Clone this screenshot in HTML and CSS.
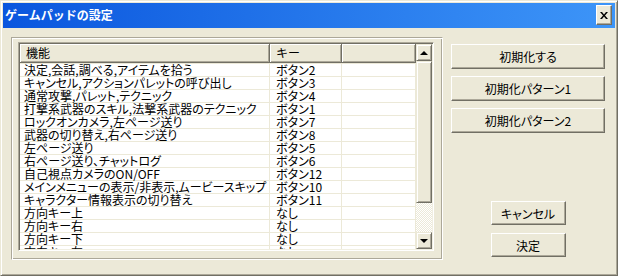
FILE: index.html
```html
<!DOCTYPE html>
<html lang="ja">
<head>
    <meta charset="UTF-8">
    <title>ゲームパッドの設定</title>
    <link rel="stylesheet" href="styles.css">
</head>
<body>

    <div class="window">
        <div class="titlebar">
            <span class="title">ゲームパッドの設定</span>
            <button class="close">
                <svg width="8" height="7" viewBox="0 0 8 7"><path d="M0 0h2l2 2.4 2-2.4h2l-3 3.5 3 3.5h-2l-2-2.4-2 2.4h-2l3-3.5z" fill="#000"/></svg>
            </button>
        </div>

        <div class="content">
            <!-- 一覧 -->
            <div class="frame">
                <div class="listview">
                    <div class="list-main">
                        <div class="header">
                            <div class="hcell c1">機能</div>
                            <div class="hcell c2">キー</div>
                            <div class="hcell c3"></div>
                        </div>
                        <div class="rows">
                            <div class="row"><div class="cell c1">決定,会話,調べる,アイテムを拾う</div><div class="cell c2">ボタン2</div><div class="cell c3"></div></div>
                            <div class="row"><div class="cell c1">キャンセル,アクションパレットの呼び出し</div><div class="cell c2">ボタン3</div><div class="cell c3"></div></div>
                            <div class="row"><div class="cell c1">通常攻撃,パレット,テクニック</div><div class="cell c2">ボタン4</div><div class="cell c3"></div></div>
                            <div class="row"><div class="cell c1">打撃系武器のスキル,法撃系武器のテクニック</div><div class="cell c2">ボタン1</div><div class="cell c3"></div></div>
                            <div class="row"><div class="cell c1">ロックオンカメラ,左ページ送り</div><div class="cell c2">ボタン7</div><div class="cell c3"></div></div>
                            <div class="row"><div class="cell c1">武器の切り替え,右ページ送り</div><div class="cell c2">ボタン8</div><div class="cell c3"></div></div>
                            <div class="row"><div class="cell c1">左ページ送り</div><div class="cell c2">ボタン5</div><div class="cell c3"></div></div>
                            <div class="row"><div class="cell c1">右ページ送り、チャットログ</div><div class="cell c2">ボタン6</div><div class="cell c3"></div></div>
                            <div class="row"><div class="cell c1">自己視点カメラのON/OFF</div><div class="cell c2">ボタン12</div><div class="cell c3"></div></div>
                            <div class="row"><div class="cell c1">メインメニューの表示/非表示,ムービースキップ</div><div class="cell c2">ボタン10</div><div class="cell c3"></div></div>
                            <div class="row"><div class="cell c1">キャラクター情報表示の切り替え</div><div class="cell c2">ボタン11</div><div class="cell c3"></div></div>
                            <div class="row"><div class="cell c1">方向キー上</div><div class="cell c2">なし</div><div class="cell c3"></div></div>
                            <div class="row"><div class="cell c1">方向キー右</div><div class="cell c2">なし</div><div class="cell c3"></div></div>
                            <div class="row"><div class="cell c1">方向キー下</div><div class="cell c2">なし</div><div class="cell c3"></div></div>
                            <div class="row"><div class="cell c1">方向キー左</div><div class="cell c2">なし</div><div class="cell c3"></div></div>
                        </div>
                    </div>
                    <div class="scrollbar">
                        <div class="sb-btn"><span class="arrow up"></span></div>
                        <div class="sb-thumb"></div>
                        <div class="sb-track"></div>
                        <div class="sb-btn"><span class="arrow down"></span></div>
                    </div>
                </div>
            </div>

            <!-- ボタン -->
            <div class="side">
                <div class="btn-group">
                    <button class="btn wide">初期化する</button>
                    <button class="btn wide">初期化パターン1</button>
                    <button class="btn wide">初期化パターン2</button>
                </div>
                <div class="btn-group bottom">
                    <button class="btn small">キャンセル</button>
                    <button class="btn small">決定</button>
                </div>
            </div>
        </div>
    </div>

</body>
</html>
```

FILE: styles.css
```css
* {
    box-sizing: border-box;
}

body {
    margin: 0;
    font-family: "Noto Sans CJK JP", sans-serif;
    font-size: 12px;
    color: #000;
}

.window {
    width: 618px;
    height: 276px;
    background: #ece9d8;
    border: 1px solid;
    border-color: #ece9d8 #716f64 #716f64 #ece9d8;
    box-shadow: inset 1px 1px #fff, inset -1px -1px #aca899;
    padding: 2px;
    display: flex;
    flex-direction: column;
}

.titlebar {
    height: 25px;
    background: linear-gradient(to right, #0a56de, #1f70e8 40%, #3d95f8);
    display: flex;
    align-items: flex-start;
    justify-content: space-between;
    padding: 2px 3px 0 2px;
}

.title {
    color: #fff;
    font-weight: bold;
    line-height: 20px;
}

.close {
    width: 16px;
    height: 20px;
    padding: 0;
    display: flex;
    align-items: center;
    justify-content: center;
    background: #ece9d8;
    border: 1px solid;
    border-color: #fff #716f64 #716f64 #fff;
    box-shadow: inset -1px -1px #aca899;
}

.content {
    flex: 1;
    display: flex;
    padding: 9px 0 0 8px;
}

/* 一覧の枠 */
.frame {
    width: 432px;
    height: 223px;
    border: 1px solid;
    border-color: #aca899 #fff #fff #aca899;
    box-shadow: inset 1px 1px #fff, inset -1px -1px #aca899;
    padding: 4px 6px;
}

.listview {
    width: 416px;
    height: 209px;
    border: 1px solid;
    border-color: #aca899 #fff #fff #aca899;
    box-shadow: inset 1px 1px #716f64, inset -1px -1px #f1efe2;
    padding: 1px;
    display: flex;
    background: #fff;
}

.list-main {
    width: 396px;
    display: flex;
    flex-direction: column;
}

.header {
    display: flex;
    height: 19px;
}

.hcell {
    height: 19px;
    line-height: 17px;
    padding-left: 6px;
    background: #ece9d8;
    border-right: 1px solid #716f64;
    border-bottom: 1px solid #716f64;
    box-shadow: inset 1px 1px #fff, inset -1px -1px #aca899;
}

.c1 { width: 250px; }
.c2 { width: 72px; }
.c3 { width: 74px; }

.rows {
    height: 186px;
    overflow: hidden;
}

.row {
    display: flex;
    height: 13px;
    border-top: 1px solid #ece9d8;
}

.cell {
    line-height: 12px;
    white-space: nowrap;
    padding-left: 6px;
    border-right: 1px solid #ece9d8;
    font-feature-settings: "palt";
}

.cell.c1 {
    padding-left: 4px;
}

/* スクロールバー */
.scrollbar {
    width: 16px;
    display: flex;
    flex-direction: column;
}

.sb-btn,
.sb-thumb {
    background: #ece9d8;
    border: 1px solid;
    border-color: #ece9d8 #716f64 #716f64 #ece9d8;
    box-shadow: inset 1px 1px #fff, inset -1px -1px #aca899;
}

.sb-btn {
    height: 17px;
    display: flex;
    align-items: center;
    justify-content: center;
}

.sb-thumb {
    height: 142px;
}

.sb-track {
    flex: 1;
    background: repeating-conic-gradient(#fff 0 25%, #ece9d8 0 50%) 0 0 / 2px 2px;
}

.arrow {
    width: 0;
    height: 0;
    border-left: 4px solid transparent;
    border-right: 4px solid transparent;
}

.arrow.up {
    border-bottom: 4px solid #000;
}

.arrow.down {
    border-top: 4px solid #000;
}

/* 右側のボタン */
.side {
    width: 170px;
    padding: 7px 0 16px 8px;
    display: flex;
    flex-direction: column;
    justify-content: space-between;
}

.btn-group {
    display: flex;
    flex-direction: column;
    align-items: center;
    width: 154px;
    gap: 7px;
}

.btn-group.bottom {
    gap: 8px;
}

.btn {
    font-family: "Noto Sans CJK JP", sans-serif;
    font-size: 12px;
    color: #000;
    padding: 0;
    background: #ece9d8;
    border: 1px solid;
    border-color: #fff #716f64 #716f64 #fff;
    box-shadow: inset -1px -1px #aca899;
    font-feature-settings: "palt";
}

.btn.wide {
    width: 154px;
    height: 25px;
}

.btn.small {
    width: 75px;
    height: 24px;
}
```
